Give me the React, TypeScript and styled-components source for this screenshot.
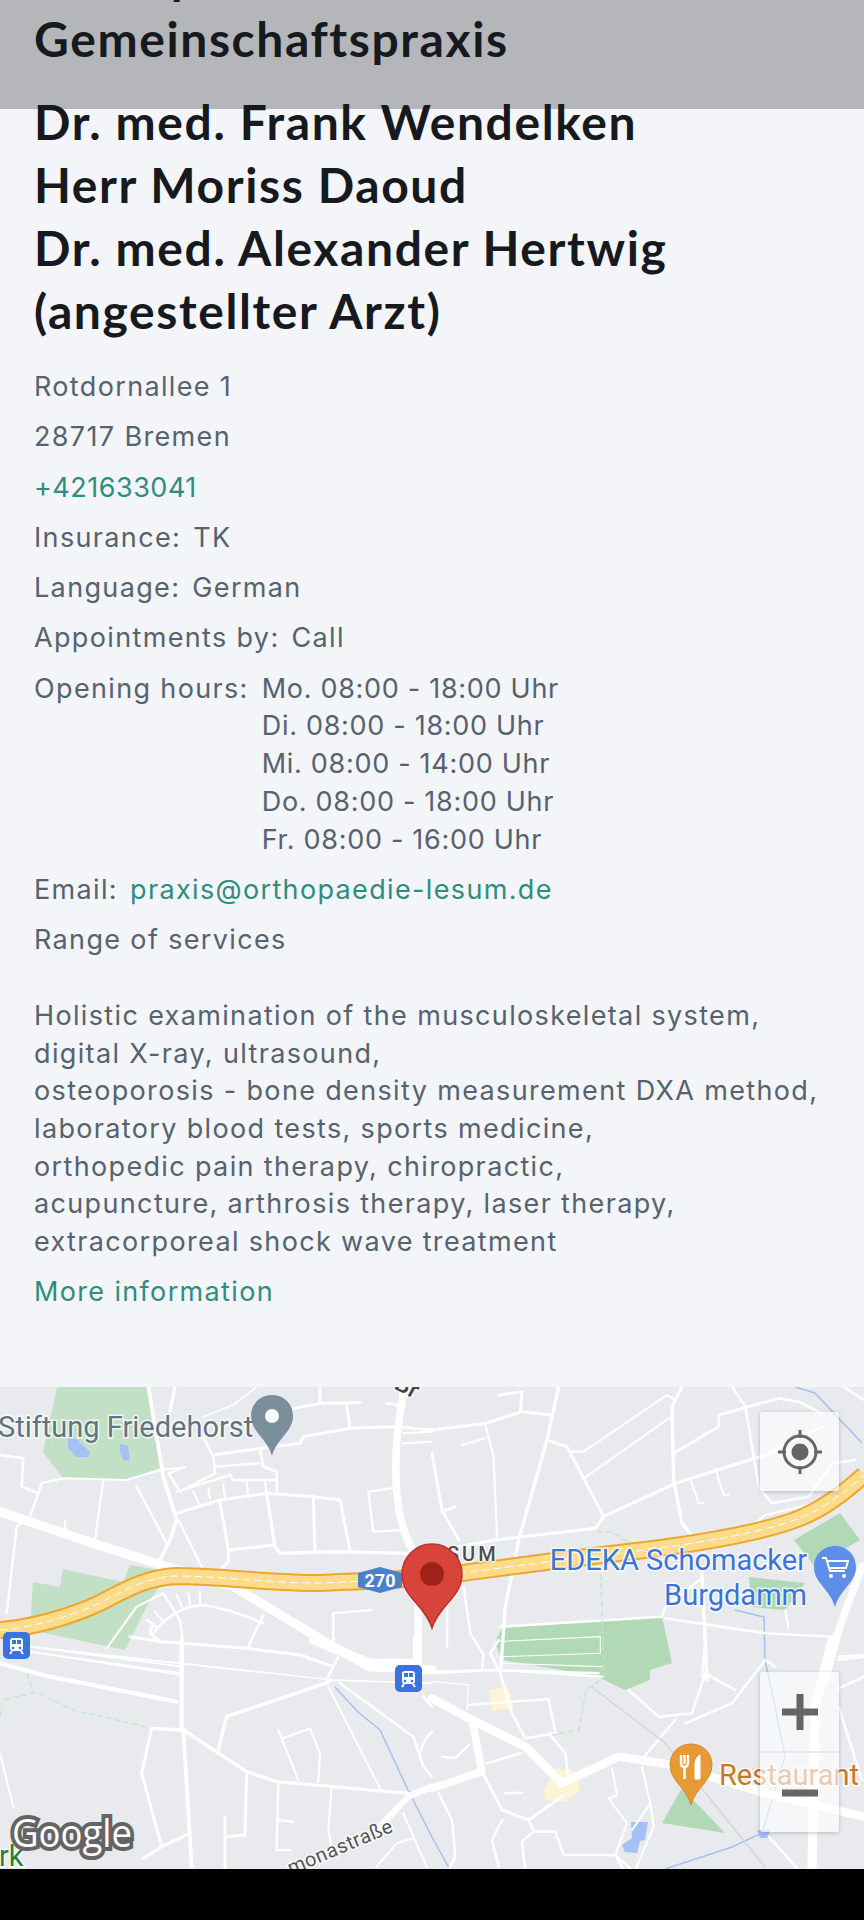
import React from 'react';
import styled, { createGlobalStyle } from 'styled-components';

const GlobalStyle = createGlobalStyle`
  html, body {
    margin: 0;
    padding: 0;
    background: #000;
  }
`;

const Page = styled.div`
  width: 864px;
  height: 1920px;
  display: flex;
  flex-direction: column;
  overflow: hidden;
  background: #f3f5f9;
  font-family: Inter, 'Noto Sans', sans-serif;
`;

const TopBar = styled.header`
  flex: none;
  height: 109px;
  padding: 0 34px;
  overflow: hidden;
  background: #b5b6ba;
`;

const Heading = styled.h1`
  margin: 0;
  font-family: Lato, 'Open Sans', sans-serif;
  font-size: 48px;
  line-height: 63px;
  font-weight: 700;
  letter-spacing: 1.6px;
  color: #16191d;
`;

const ClinicName = styled(Heading)`
  margin-top: -56px;
`;

const DoctorNames = styled(Heading)`
  position: relative;
  margin-top: -19px;
`;

const Content = styled.main`
  flex: 1;
  padding: 0 34px;
`;

const Details = styled.div`
  margin-top: 26px;
  font-size: 27px;
  line-height: 37.7px;
  letter-spacing: 1.35px;
  color: #56626e;
`;

const Row = styled.div`
  display: flex;
  gap: 12px;
  margin-bottom: 12.6px;
`;

const Link = styled.a`
  color: #2f8c80;
  text-decoration: none;
`;

const PhoneLink = styled(Link)`
  letter-spacing: 0.5px;
`;

const Hours = styled.div`
  margin-left: 1px;
  letter-spacing: 0.7px;
`;

const Services = styled.p`
  margin: 38px 0 12.6px;
`;

const MapArea = styled.section`
  position: relative;
  flex: none;
  height: 482px;
  overflow: hidden;
  background: #e8eaed;
`;

const MapDrawing = styled.svg`
  display: block;
  width: 864px;
  height: 482px;
`;

const MapControl = styled.div<{ $top: number; $height: number }>`
  position: absolute;
  top: ${p => p.$top}px;
  left: 760px;
  width: 79px;
  height: ${p => p.$height}px;
  display: flex;
  flex-direction: column;
  border-radius: 3px;
  background: rgba(255, 255, 255, 0.62);
  box-shadow: 0 1px 4px rgba(0, 0, 0, 0.22);
`;

const ControlButton = styled.div`
  flex: 1;
  display: flex;
  align-items: center;
  justify-content: center;

  & + & {
    border-top: 2px solid rgba(225, 225, 228, 0.7);
  }
`;

const Footer = styled.div`
  flex: none;
  height: 51px;
  background: #000;
`;

type Road = [string, number];

const ROAD_TILES: { x: number; y: number; roads: Road[] }[] = [
  {
    x: 0,
    y: 1380,
    roads: [
      ['M445 20 L490 290 L530 420 L510 480 L480 540', 9],
      ['M525 20 L510 95', 8],
      ['M610 110 L700 75 L770 20', 4],
      ['M610 170 L640 230 L645 280 L540 335 L505 280 L550 262', 6],
      ['M880 85 L960 70 L1080 68 M960 20 L960 70 M1040 75 L1050 145 M1160 70 L1200 75', 7],
      ['M640 225 L780 205 L900 190 L910 170 L1050 145 L1190 140 L1296 150', 7],
      ['M780 205 L790 260 L830 275 L830 335 M645 260 L780 250', 6],
      ['M530 335 L690 285 L700 300 L830 300', 6],
      ['M530 400 L660 360 L800 340 L940 350 L1020 360 L1050 510', 7],
      ['M580 335 L600 375 M625 325 L630 355 M670 315 L675 350 M740 305 L745 345 M795 305 L800 340', 5],
      ['M660 365 L685 510 L685 545 L650 580', 7],
      ['M800 340 L825 500 L840 520 L1000 515 L1230 520', 8],
      ['M940 350 L945 510 M690 510 L820 495', 7],
      ['M1180 325 L1105 335 L1120 455 L1200 450', 6],
      ['M1210 40 Q1180 200 1190 330 Q1200 460 1250 530', 18],
      ['M1255 620 L1255 860', 18],
      ['M1210 160 L1296 155 M1210 190 L1296 185', 5],
      ['M0 225 L70 235 L65 320 L115 340', 6],
      ['M125 310 L190 295 L380 300 L480 270 L555 262', 5],
      ['M125 310 L90 410 L50 440 L20 700', 6],
      ['M310 300 L285 480 M410 320 L500 490 M535 420 L610 570 M195 425 L195 450', 6],
      ['M0 395 L280 490 L500 560 L700 620 L800 680 L1000 800 L1110 860 L1296 870', 22],
      ['M320 805 L410 680 L490 640', 5],
      ['M490 640 L540 720 L550 800 M460 760 Q520 680 610 675 Q700 690 790 730', 6],
      ['M530 645 L545 680 M565 640 L570 675 M600 635 L600 670 M440 720 L470 740 M465 695 L490 725', 5],
      ['M460 730 L450 760 L480 785 L740 805 L900 825 L1000 860 M390 770 L480 785', 7],
      ['M790 705 L745 800 M1000 780 L1000 700 L1115 690', 6],
      ['M90 800 L545 860 M90 815 L545 880', 4],
      ['M545 800 L545 900', 10],
    ],
  },
  {
    x: 432,
    y: 1380,
    roads: [
      ['M0 150 L160 130 L270 95 L355 105 M200 45 L270 35 L265 95', 7],
      ['M380 20 L345 180 L260 480 L220 680 L205 880', 8],
      ['M160 135 L185 230 L195 470 M90 195 L160 175', 5],
      ['M345 180 L405 200 L515 410 L490 445 L190 480 L80 500', 7],
      ['M415 215 L455 215 L705 45 L730 60 M455 295 L725 105', 5],
      ['M515 410 L730 310 L1000 225 L1170 140', 7],
      ['M725 220 L860 140 L860 105 L1040 55 L1100 65 L1170 100', 6],
      ['M750 20 L720 80 L725 300 L750 430 L790 480', 8],
      ['M900 20 L940 80 L980 320 L1020 370 L1130 350 L1200 250 L1270 240 M1235 20 L1296 60', 6],
      ['M775 295 L800 370 L815 370 M850 265 L875 345 L890 345 M940 450 L1000 405 L1130 375', 5],
      ['M0 220 L30 390 L80 480 M30 395 L70 380', 7],
      ['M95 620 L115 760 L155 825 L150 870 M45 670 L45 800', 6],
      ['M700 715 L1000 760 L1200 770 M690 710 L700 680 L810 595 M205 740 L690 710', 6],
      ['M810 580 L825 900', 8],
      ['M1060 690 L1070 745', 5],
      ['M1290 560 L1220 750 L1180 900', 18],
      ['M1220 830 L1296 825', 6],
      ['M190 785 L505 770 L505 820 L215 830 L210 850 L510 860', 2.5],
      ['M0 880 L180 870 L500 880', 6],
    ],
  },
  {
    x: 0,
    y: 1640,
    roads: [
      ['M0 70 L150 110 L530 185', 10],
      ['M545 0 L545 270', 10],
      ['M90 20 L540 70 L1000 120 L1296 130 M90 35 L540 105', 4],
      ['M680 230 L990 125 M680 230 L655 330', 8],
      ['M455 265 L550 270 L740 395 L830 425 L1225 460', 8],
      ['M455 265 L425 400 L485 620 L430 655 M485 620 L570 580', 7],
      ['M550 270 L575 680', 9],
      ['M740 400 L735 585 L680 590 M675 530 L675 690', 7],
      ['M835 430 L830 630 L870 630 M835 540 L880 545', 6],
      ['M835 270 L895 420 M850 295 L930 265 L960 340 L955 425', 5],
      ['M995 445 L985 570 L1000 650 M985 140 L1140 445', 5],
      ['M1020 130 L1240 290 L1270 380 L1296 410 M980 120 L1015 50', 6],
      ['M1130 570 L1225 470 L1296 440', 15],
      ['M940 0 L1110 70 L1250 70', 22],
      ['M1250 60 L1250 0', 18],
      ['M0 340 L40 500 M1210 520 L1280 680 M1130 680 L1190 610 L1240 595', 5],
      ['M1270 170 L1296 200 M1260 340 Q1270 300 1296 275', 6],
    ],
  },
  {
    x: 432,
    y: 1640,
    roads: [
      ['M0 95 L190 90 L510 110', 5],
      ['M0 125 L110 135 L105 210', 3],
      ['M110 195 L230 185 L350 178 L370 280 L280 295 L240 220 L205 100 L175 40 L200 0', 6],
      ['M0 175 L120 240 L280 320 L390 430', 20],
      ['M120 240 L150 395 L0 445', 18],
      ['M390 430 L560 350 L720 375 L1000 460 L1296 530', 20],
      ['M150 395 L210 510 L290 540 L390 470', 7],
      ['M355 285 L400 340 L410 420 M30 350 L70 355 L110 315 M165 370 L265 340 M220 460 L270 458', 6],
      ['M20 460 L60 540 L70 650 L50 690 M210 540 L180 600 L200 680', 6],
      ['M290 540 L305 575 L370 575 L395 645 L550 645 L575 690 M305 575 L270 605 L280 690', 6],
      ['M540 385 L555 465 L530 475 L585 550 L550 645 L600 690 M630 380 L655 490 L600 570 M655 490 L665 560 L610 690', 5],
      ['M590 150 L680 230 L780 220 L820 100 L910 150 M640 345 L730 240', 6],
      ['M760 250 L900 190 L1000 60 L1030 80 M820 0 L810 110 M1010 590 L1100 690', 6],
      ['M1200 0 L1150 200 L1140 690', 22],
      ['M1220 145 L1296 110 M1220 60 L1296 50 M1220 200 L1290 420', 6],
    ],
  },
];

const PALE_PARKS = ['57,1387 147,1387 160,1468 127,1480 63,1478 43,1452', '33,1582 60,1587 63,1569 123,1582 130,1565 170,1572 150,1600 125,1650 30,1630'];

const PARKS = [
  '502,1628 602,1620 602,1677 502,1660 495,1643',
  '602,1620 662,1617 672,1663 650,1670 650,1680 625,1690 600,1678',
  '794,1540 840,1513 860,1540 815,1567',
  '749,1577 805,1583 785,1610 752,1607',
  '682,1788 725,1833 662,1823',
];

const WATER = [
  '68,1436 78,1440 90,1452 88,1457 76,1457 68,1448',
  '120,1444 128,1446 130,1460 124,1461 120,1452',
  '631,1822 648,1822 645,1840 640,1841 637,1853 625,1852 622,1845 632,1838',
  '757,1830 770,1830 768,1838 760,1838',
];

const RIVERS = [
  'M795 1387 L815 1393 L862 1443',
  'M735 1610 L764 1617 L765 1660 L775 1707 L785 1757 L772 1800 L762 1833 L732 1847 L665 1869',
  'M335 1687 L358 1712 L380 1730 L408 1790 L432 1837 L449 1868',
];

const PATHS = [
  'M0 1717 L3 1700 L37 1692 L73 1710 L147 1727',
  'M27 1673 L33 1692',
  'M597 1532 L612 1532 L632 1545',
  'M600 1547 L604 1677 L586 1690 L579 1730 L552 1735',
  'M60 1413 L97 1387 M105 1395 L135 1400 M50 1445 L60 1430 M135 1445 L158 1468',
];

const HIGHWAY =
  'M0 1630 C30 1628 70 1617 100 1603 C125 1590 145 1578 175 1576 C220 1576 265 1583 320 1583 C365 1581 400 1580 432 1577 C480 1571 540 1562 645 1550 C700 1543 765 1532 800 1518 C825 1508 845 1492 864 1475';

const PIN_PATH = 'M0 0 C-12 0 -21 9 -21 21 C-21 37 -5 43 0 61 C5 43 21 37 21 21 C21 9 12 0 0 0 Z';

const haloText = { paintOrder: 'stroke', stroke: 'rgba(255,255,255,0.75)', strokeWidth: 3, fontFamily: 'Roboto, sans-serif' } as const;

function TrainBadge({ x, y }: { x: number; y: number }) {
  return (
    <g transform={`translate(${x} ${y})`}>
      <rect width="27" height="27" rx="5" fill="#3a72e0" />
      <rect x="7" y="6" width="13" height="13" rx="3" fill="#fff" />
      <rect x="9" y="8" width="4" height="4" fill="#3a72e0" />
      <rect x="14" y="8" width="4" height="4" fill="#3a72e0" />
      <circle cx="10" cy="16" r="1.3" fill="#3a72e0" />
      <circle cx="17" cy="16" r="1.3" fill="#3a72e0" />
      <path d="M9 19 L7 22 M18 19 L20 22" stroke="#fff" strokeWidth="2" />
    </g>
  );
}

function ClinicMap() {
  return (
    <MapDrawing viewBox="0 1387 864 482">
      {PALE_PARKS.map(points => (
        <polygon key={points} points={points} fill="#c2e0c5" />
      ))}
      {PARKS.map(points => (
        <polygon key={points} points={points} fill="#b2d9b6" />
      ))}
      <polygon points="489,1690 508,1686 514,1708 492,1711" fill="#fdf3d6" />
      <polygon points="544,1790 556,1768 578,1772 580,1790 566,1802 545,1800" fill="#fdf3d6" />
      {WATER.map(points => (
        <polygon key={points} points={points} fill="#a4c0f4" />
      ))}
      {RIVERS.map(d => (
        <path key={d} d={d} fill="none" stroke="#a4c0f4" strokeWidth="1.5" />
      ))}
      {ROAD_TILES.map(tile => (
        <g key={`${tile.x}-${tile.y}`} transform={`translate(${tile.x} ${tile.y}) scale(0.3333)`}>
          {tile.roads.map(([d, width]) => (
            <path key={d} d={d} fill="none" stroke="#fff" strokeWidth={width * 1.25} strokeLinejoin="round" strokeLinecap="round" />
          ))}
        </g>
      ))}
      {PATHS.map(d => (
        <path key={d} d={d} fill="none" stroke="#bfe6c6" strokeWidth="1.2" strokeDasharray="6 3" />
      ))}
      <path d="M592 1687 L665 1743 L765 1867" fill="none" stroke="#d3d5d8" strokeWidth="1.5" />
      <path d={HIGHWAY} fill="none" stroke="#eea62c" strokeWidth="18" />
      <path d={HIGHWAY} fill="none" stroke="#fbdb8c" strokeWidth="14" />
      <path d={HIGHWAY} fill="none" stroke="#fff" strokeWidth="1" strokeDasharray="8 4" />

      <polygon points="358,1573 380,1567 402,1573 402,1587 380,1593 358,1587" fill="#4c7fce" />
      <text x="380" y="1587" textAnchor="middle" fill="#fff" fontFamily="Roboto, sans-serif" fontWeight="700" fontSize="18">
        270
      </text>

      <text x="-2" y="1437" fill="#5f7483" fontSize="29" style={haloText}>
        Stiftung Friedehorst
      </text>
      <text x="447" y="1561" fill="#4d4d4d" fontSize="20" fontWeight="500" letterSpacing="3" style={haloText}>
        SUM
      </text>
      <text x="807" y="1570" textAnchor="end" fill="#3a74d9" fontSize="29" style={haloText}>
        EDEKA Schomacker
      </text>
      <text x="807" y="1605" textAnchor="end" fill="#3a74d9" fontSize="29" style={haloText}>
        Burgdamm
      </text>
      <text x="719" y="1785" fill="#c87628" fontSize="29" style={haloText}>
        Restaurant
      </text>
      <text x="-1" y="1866" fill="#2f7d32" fontSize="29" style={haloText}>
        rk
      </text>
      <text x="0" y="0" transform="translate(291 1875) rotate(-23)" fill="#555" fontSize="20" letterSpacing="0.5" style={haloText}>
        monastraße
      </text>
      <text x="0" y="0" transform="translate(393 1388) rotate(28)" fill="#444" fontSize="24" fontWeight="500" style={haloText}>
        Br
      </text>
      <text
        x="12"
        y="1847"
        fill="#fff"
        stroke="#646464"
        strokeWidth="8"
        fontFamily="'Open Sans', sans-serif"
        fontSize="38"
        fontWeight="500"
        textLength="120"
        lengthAdjust="spacingAndGlyphs"
        style={{ paintOrder: 'stroke' }}
      >
        Google
      </text>

      <g transform="translate(272 1395)">
        <path d={PIN_PATH} fill="#7b8e9b" />
        <circle cx="0" cy="21" r="7" fill="#fff" />
      </g>

      <g transform="translate(835 1546)">
        <path d={PIN_PATH} fill="#5e8ee8" />
        <path d="M-13 12 L-9 12 L-5 25 L10 25 M-8 15 L13 15 L11 22 L-6 22" fill="none" stroke="#fff" strokeWidth="2" />
        <circle cx="-4" cy="30" r="2" fill="#fff" />
        <circle cx="9" cy="30" r="2" fill="#fff" />
      </g>

      <g transform="translate(691 1744)">
        <path d={PIN_PATH} fill="#e69a35" stroke="#d98a2a" strokeWidth="1" />
        <path d="M-10 11 L-10 19 Q-10 23 -6.5 23 L-6.5 35 M-6.5 11 L-6.5 20 M-3 11 L-3 19 Q-3 23 -6.5 23" fill="none" stroke="#fff" strokeWidth="2.4" />
        <path d="M4 35 L4 25 Q3 14 9 11 L9 35 Z" fill="#fff" stroke="#fff" strokeWidth="1" />
      </g>

      <TrainBadge x={3} y={1632} />
      <TrainBadge x={395} y={1665} />

      <path
        d="M432 1544 C415 1544 402 1558 402 1574 C402 1597 425 1605 432 1628 C439 1605 462 1597 462 1574 C462 1558 449 1544 432 1544 Z"
        fill="#d8433a"
        stroke="#b8322b"
        strokeWidth="1.5"
      />
      <circle cx="432" cy="1574" r="12" fill="#9d2319" />
    </MapDrawing>
  );
}

function LocateIcon() {
  return (
    <svg width="46" height="46" viewBox="0 0 46 46">
      <circle cx="23" cy="23" r="16" fill="none" stroke="#666" strokeWidth="3" />
      <circle cx="23" cy="23" r="8.5" fill="#666" />
      <path d="M23 1 V9 M23 37 V45 M1 23 H9 M37 23 H45" stroke="#666" strokeWidth="3" />
    </svg>
  );
}

function ZoomGlyph({ plus }: { plus?: boolean }) {
  return (
    <svg width="36" height="36" viewBox="0 0 36 36">
      <rect x="0" y="14.5" width="36" height="7" fill="#666" />
      {plus && <rect x="14.5" y="0" width="7" height="36" fill="#666" />}
    </svg>
  );
}

const OPENING_HOURS = [
  'Mo. 08:00 - 18:00 Uhr',
  'Di. 08:00 - 18:00 Uhr',
  'Mi. 08:00 - 14:00 Uhr',
  'Do. 08:00 - 18:00 Uhr',
  'Fr. 08:00 - 16:00 Uhr',
];

const SERVICES = [
  'Holistic examination of the musculoskeletal system,',
  'digital X-ray, ultrasound,',
  'osteoporosis - bone density measurement DXA method,',
  'laboratory blood tests, sports medicine,',
  'orthopedic pain therapy, chiropractic,',
  'acupuncture, arthrosis therapy, laser therapy,',
  'extracorporeal shock wave treatment',
];

export default function App() {
  return (
    <Page>
      <GlobalStyle />
      <TopBar>
        <ClinicName>
          Orthopädische
          <br />
          Gemeinschaftspraxis
        </ClinicName>
      </TopBar>
      <Content>
        <DoctorNames>
          Dr. med. Frank Wendelken
          <br />
          Herr Moriss Daoud
          <br />
          Dr. med. Alexander Hertwig
          <br />
          (angestellter Arzt)
        </DoctorNames>
        <Details>
          <Row>Rotdornallee 1</Row>
          <Row>28717 Bremen</Row>
          <Row>
            <PhoneLink>+421633041</PhoneLink>
          </Row>
          <Row>
            <span>Insurance:</span>
            <span>TK</span>
          </Row>
          <Row>
            <span>Language:</span>
            <span>German</span>
          </Row>
          <Row>
            <span>Appointments by:</span>
            <span>Call</span>
          </Row>
          <Row>
            <span>Opening hours:</span>
            <Hours>
              {OPENING_HOURS.map(line => (
                <div key={line}>{line}</div>
              ))}
            </Hours>
          </Row>
          <Row>
            <span>Email:</span>
            <Link>praxis@orthopaedie-lesum.de</Link>
          </Row>
          <Row>Range of services</Row>
          <Services>
            {SERVICES.map(line => (
              <React.Fragment key={line}>
                {line}
                <br />
              </React.Fragment>
            ))}
          </Services>
          <Row>
            <Link>More information</Link>
          </Row>
        </Details>
      </Content>
      <MapArea>
        <ClinicMap />
        <MapControl $top={25} $height={79}>
          <ControlButton>
            <LocateIcon />
          </ControlButton>
        </MapControl>
        <MapControl $top={285} $height={160}>
          <ControlButton>
            <ZoomGlyph plus />
          </ControlButton>
          <ControlButton>
            <ZoomGlyph />
          </ControlButton>
        </MapControl>
      </MapArea>
      <Footer />
    </Page>
  );
}
